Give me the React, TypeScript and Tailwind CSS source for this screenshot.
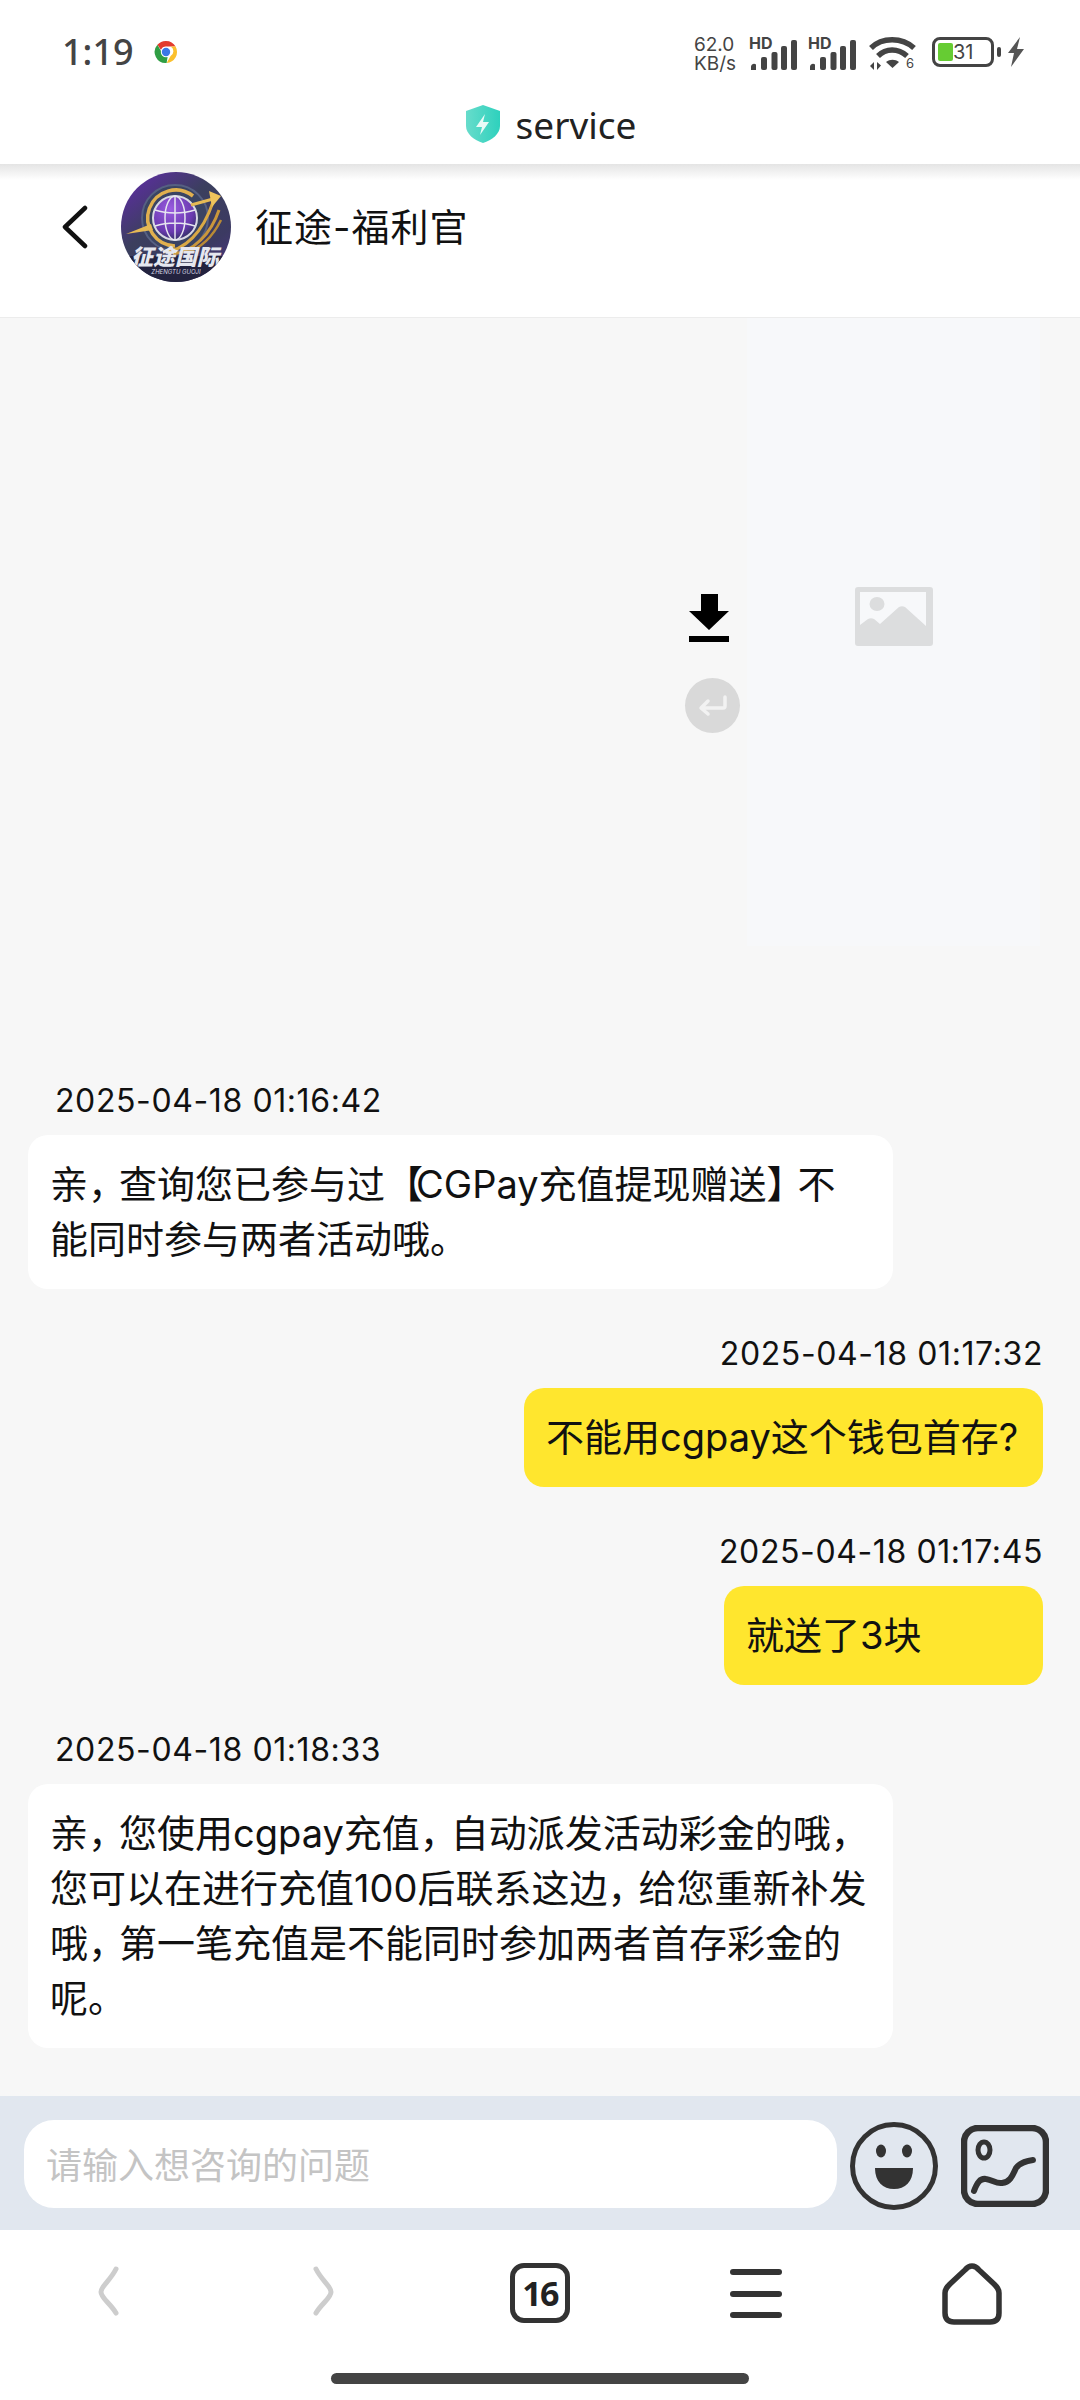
const cjk = "font-['Inter','Noto_Sans_CJK_SC',sans-serif]";

function Punct({ children }: { children: React.ReactNode }) {
	return <span className="tracking-[-7px]">{children}</span>;
}

function ChromeIcon() {
	return (
		<svg width="24" height="24" viewBox="0 0 24 24">
			<path d="M12 1a11 11 0 0 1 9.6 5.6H12a5.4 5.4 0 0 0-5 3.4L3.4 4.8A11 11 0 0 1 12 1z" fill="#e33b2e" />
			<path d="M21.6 6.6A11 11 0 0 1 12.6 23l4-7a5.4 5.4 0 0 0 .1-9.4z" fill="#fbc02d" />
			<path d="M12.6 23A11 11 0 0 1 3.4 4.8L7.6 12a5.4 5.4 0 0 0 6 5z" fill="#2f9e44" />
			<circle cx="12" cy="12" r="5.2" fill="#fff" />
			<circle cx="12" cy="12" r="4.2" fill="#3b78e7" />
		</svg>
	);
}

function Signal() {
	return (
		<div className="relative w-[49px] h-[34px]">
			<span className="absolute left-0 -top-[2px] text-[16px] leading-[16px] font-bold text-[#444] font-['Inter',sans-serif]">HD</span>
			<svg className="absolute left-0 top-0" width="49" height="34" viewBox="0 0 49 34" fill="#444">
				<path d="M2 33v-3.5a3 3 0 0 1 5-2V33z" />
				<rect x="12" y="20" width="6" height="13" rx="2" />
				<rect x="22.5" y="15" width="6" height="18" rx="2" />
				<rect x="32" y="9" width="6" height="24" rx="2" />
				<rect x="42" y="3" width="6" height="30" rx="2" />
			</svg>
		</div>
	);
}

function Wifi() {
	return (
		<div className="relative w-[48px] h-[36px]">
			<svg width="48" height="36" viewBox="0 0 48 36" fill="none">
				<path d="M2 13C13 2 33 2 45 13" stroke="#444" strokeWidth="5.5" />
				<path d="M9 21C17 13 29 13 38 21" stroke="#444" strokeWidth="5.5" />
				<path d="M17 27c4-3 9-3 13 0l-6.500 6z" fill="#444" />
				<path d="M5 27v8l-4-4zM8 35v-8l4 3.500z" fill="#444" />
			</svg>
			<span className="absolute left-[37px] top-[20px] text-[13px] leading-[16px] text-[#444] font-['Inter',sans-serif]">6</span>
		</div>
	);
}

function Battery() {
	return (
		<div className="flex items-center gap-[3px]">
			<div className="w-[62px] h-[30px] rounded-[8px] border-[3px] border-[#444] flex items-center pl-[3px] relative">
				<div className="w-[15px] h-[18px] bg-[#66cc33] rounded-[2px]" />
				<span className="text-[20px] leading-[20px] text-[#444] font-['Inter',sans-serif]">31</span>
			</div>
			<div className="w-[4px] h-[10px] bg-[#444] rounded-[2px]" />
		</div>
	);
}

function StatusBar() {
	return (
		<div className="h-[104px] flex items-start justify-between pl-[62px] pr-[55px] pt-[35px]">
			<div className="flex items-center h-[34px]">
				<span className="w-[92px] text-[#444] text-[36px] leading-[34px] font-medium font-['Noto_Sans',sans-serif]">1:19</span>
				<ChromeIcon />
			</div>
			<div className="flex items-start">
				<div className="w-[46px] mr-[8px] text-[#444] text-[19px] leading-[19px] whitespace-nowrap font-['Inter',sans-serif]">
					62.0
					<br />
					KB/s
				</div>
				<div className="flex gap-[10px] ml-[1px] mt-[2px]">
					<Signal />
					<Signal />
				</div>
				<div className="ml-[12px]"><Wifi /></div>
				<div className="ml-[15px] mt-[2px]"><Battery /></div>
				<svg className="ml-[6px] mt-[2px]" width="18" height="30" viewBox="0 0 18 30" fill="#555">
					<path d="M13 0 1 16h6l-3 14L17 12h-7z" />
				</svg>
			</div>
		</div>
	);
}

function ServiceRow() {
	return (
		<div className="h-[60px] flex items-start justify-center gap-[15px] pl-[21px]">
			<svg width="36" height="40" viewBox="0 0 36 40">
				<defs>
					<linearGradient id="shield" x1="0" x2="1">
						<stop offset="0" stopColor="#67dccb" />
						<stop offset="1" stopColor="#2ed1bd" />
					</linearGradient>
				</defs>
				<path d="M18 1 35 7v15c0 8-8 14-17 17C9 36 1 30 1 22V7z" fill="url(#shield)" />
				<path d="M20 10 11 23h6l-2 8 9-13h-6z" fill="#e8fbf7" />
			</svg>
			<span className="text-[37px] leading-[42px] text-[#222] font-['Noto_Sans',sans-serif]">service</span>
		</div>
	);
}

function Avatar() {
	return (
		<svg width="110" height="110" viewBox="0 0 110 110">
			<defs>
				<linearGradient id="ava" x1="0.1" y1="0" x2="0.9" y2="1">
					<stop offset="0" stopColor="#5f2ca6" />
					<stop offset="0.4" stopColor="#3b3f5e" />
					<stop offset="0.75" stopColor="#3c3a62" />
					<stop offset="1" stopColor="#4c3585" />
				</linearGradient>
				<radialGradient id="globe" cx="0.4" cy="0.3" r="0.85">
					<stop offset="0" stopColor="#9a5ce0" />
					<stop offset="0.6" stopColor="#6a3ab0" />
					<stop offset="1" stopColor="#0e2a38" />
				</radialGradient>
				<clipPath id="avaClip"><circle cx="55" cy="55" r="55" /></clipPath>
			</defs>
			<g clipPath="url(#avaClip)">
				<rect width="110" height="110" fill="url(#ava)" />
				<path d="M0 84h110v26H0z" fill="#23233f" />
				<circle cx="54" cy="46" r="33" fill="#3a4463" stroke="#566082" strokeWidth="2" />
				<path d="M72 24A28 28 0 1 0 54 74" fill="none" stroke="#e0b04f" strokeWidth="3.500" />
				<circle cx="54" cy="46" r="22" fill="url(#globe)" stroke="#d8d8e4" strokeWidth="2" />
				<g fill="none" stroke="#e6e6f0" strokeWidth="1.500">
					<ellipse cx="54" cy="46" rx="10" ry="22" />
					<path d="M54 24v44M34 38c12 4 28 4 40 0M34 54c12-4 28-4 40 0" />
				</g>
				<path d="M5 62 30 52l2 6z" fill="#e5b955" />
				<path d="M42 80c22-1 40-20 50-50" fill="none" stroke="#d9a945" strokeWidth="3" />
				<path d="M52 82c20-2 38-20 46-44" fill="none" stroke="#c9973c" strokeWidth="3" />
				<path d="M66 80c14-4 26-16 34-32" fill="none" stroke="#b98a35" strokeWidth="2.500" />
				<path d="M70 33 92 27" stroke="#e5b955" strokeWidth="3" />
				<path d="M88 19 100 24 91 35z" fill="#efc35c" />
				<text x="54" y="93" textAnchor="middle" fontSize="22" fontWeight="900" fontStyle="italic" fill="#e5e7ef" fontFamily="'Noto Sans CJK SC', sans-serif">征途国际</text>
				<text x="55" y="102" textAnchor="middle" fontSize="6" fontStyle="italic" fill="#d8d8e4" fontFamily="Inter, sans-serif">ZHENGTU GUOJI</text>
			</g>
		</svg>
	);
}

function Header() {
	return (
		<div className="h-[154px] bg-white border-b border-[#ececec] flex items-center pl-[60px] pb-[28px] relative">
			<div className="absolute left-0 right-0 top-0 h-[16px] bg-gradient-to-b from-[#e4e4e4] to-white" />
			<svg className="relative" width="28" height="44" viewBox="0 0 28 44" fill="none">
				<path d="M25 3 5 22l20 19" stroke="#111" strokeWidth="4.500" strokeLinecap="round" strokeLinejoin="round" />
			</svg>
			<div className="relative ml-[33px]"><Avatar /></div>
			<span className={`relative ml-[24px] text-[38px] tracking-[1px] leading-[50px] text-[#111] ${cjk}`}>征途-福利官</span>
		</div>
	);
}

function MediaPlaceholder() {
	return (
		<div className="h-[762px] flex items-start pl-[685px]">
			<div className="w-[55px] pt-[276px] flex flex-col items-center">
				<svg className="-ml-[8px]" width="40" height="49" viewBox="0 0 40 49">
					<path d="M12 0h17v17h11L20 36 0 17h12zM0 42h40v6H0z" fill="#000" />
				</svg>
				<div className="mt-[35px] w-[55px] h-[55px] rounded-full bg-[#d9d9d9] flex items-center justify-center">
					<svg width="32" height="24" viewBox="0 0 32 24" fill="none">
						<path d="M28 3v9a2 2 0 0 1-2 2H5M11 7l-7 7 7 6" stroke="#f2f2f2" strokeWidth="3.500" strokeLinecap="round" strokeLinejoin="round" />
					</svg>
				</div>
			</div>
			<div className="ml-[7px] w-[293px] h-[628px] bg-[#f7f8fa] flex justify-center pt-[269px]">
				<svg width="78" height="59" viewBox="0 0 78 59">
					<path fillRule="evenodd" d="M3 0h72a3 3 0 0 1 3 3v53a3 3 0 0 1-3 3H3a3 3 0 0 1-3-3V3a3 3 0 0 1 3-3zm2 5v33l8-6c2-1 4-1 6 0l6 5 19-17c2-1 4-1 6 0l21 19V5z" fill="#dcddde" />
					<ellipse cx="22" cy="17" rx="7.500" ry="7" fill="#dcddde" />
				</svg>
			</div>
		</div>
	);
}

interface MessageProps {
	time: string;
	mine?: boolean;
	children: React.ReactNode;
	width: string;
}

function Message({ time, mine, children, width }: MessageProps) {
	return (
		<div className={`flex flex-col mb-[44px] ${mine ? "items-end pr-[37px]" : "items-start pl-[28px]"}`}>
			<div className={`h-[40px] leading-[42px] mb-[15px] text-[32px] tracking-[0.6px] text-[#111] whitespace-nowrap ${mine ? "" : "pl-[27px]"} ${cjk}`}>
				{time}
			</div>
			<div className={`${width} rounded-[20px] pl-[22px] pr-[23px] py-[22px] text-[38px] leading-[55px] text-[#111] whitespace-nowrap ${mine ? "bg-[#ffe62e]" : "bg-white"} ${cjk}`}>
				{children}
			</div>
		</div>
	);
}

function Chat() {
	return (
		<div className="h-[1778px] bg-[#f7f7f7] overflow-hidden">
			<MediaPlaceholder />
			<Message time="2025-04-18 01:16:42" width="w-[865px]">
				亲<Punct>，</Punct>查询您已参与过<Punct>【</Punct>CGPay充值提现赠送<Punct>】</Punct>不
				<br />
				能同时参与两者活动哦。
			</Message>
			<Message time="2025-04-18 01:17:32" mine width="w-[519px]">
				不能用cgpay这个钱包首存?
			</Message>
			<Message time="2025-04-18 01:17:45" mine width="w-[319px]">
				就送了3块
			</Message>
			<Message time="2025-04-18 01:18:33" width="w-[865px]">
				亲<Punct>，</Punct>您使用cgpay充值<Punct>，</Punct>自动派发活动彩金的哦，
				<br />
				您可以在进行充值100后联系这边<Punct>，</Punct>给您重新补发
				<br />
				哦<Punct>，</Punct>第一笔充值是不能同时参加两者首存彩金的
				<br />
				呢。
			</Message>
		</div>
	);
}

function InputBar() {
	return (
		<div className="h-[134px] bg-[#e1e7ef] flex items-start pl-[24px] pt-[24px]">
			<div className={`w-[813px] h-[88px] bg-white rounded-[30px] flex items-center pl-[22px] pt-[3px] text-[36px] text-[#c4c4c4] ${cjk}`}>
				请输入想咨询的问题
			</div>
			<svg className="ml-[13px] mt-[2px]" width="88" height="88" viewBox="0 0 88 88">
				<circle cx="44" cy="44" r="41.500" fill="none" stroke="#333" strokeWidth="5" />
				<ellipse cx="31" cy="29" rx="5" ry="6.500" fill="#333" />
				<ellipse cx="57" cy="29" rx="5" ry="6.500" fill="#333" />
				<path d="M25 46h38c0 14-8 21-19 21S25 60 25 46z" fill="#333" />
			</svg>
			<svg className="ml-[23px] mt-[5px]" width="88" height="82" viewBox="0 0 88 82" fill="none">
				<rect x="3" y="3" width="82" height="76" rx="14" stroke="#333" strokeWidth="6.500" />
				<ellipse cx="23" cy="25" rx="6" ry="8" stroke="#333" strokeWidth="5" />
				<path d="M13 66c3-8 6-13 12-12 7 1 10 5 16 4 9-1 11-9 14-15 3-4 9-7 17-8" stroke="#333" strokeWidth="6" strokeLinecap="round" />
			</svg>
		</div>
	);
}

function BrowserBar() {
	return (
		<div className="h-[170px] bg-white flex flex-col">
			<div className="grid grid-cols-5 h-[94px] pt-[33px] justify-items-center items-start">
				<svg className="mt-[3px]" width="24" height="50" viewBox="0 0 24 50" fill="none">
					<path d="M20 3C14 15 5 20 5 26s9 11 15 21" stroke="#cdcdcd" strokeWidth="5" strokeLinecap="round" />
				</svg>
				<svg className="mt-[3px]" width="24" height="50" viewBox="0 0 24 50" fill="none">
					<path d="M4 3c6 12 15 17 15 23S10 37 4 47" stroke="#cdcdcd" strokeWidth="5" strokeLinecap="round" />
				</svg>
				<div className="w-[60px] h-[60px] rounded-[14px] border-[5px] border-[#333] flex items-center justify-center text-[34px] font-bold text-[#222] tracking-tighter font-['Noto_Sans',sans-serif]">
					16
				</div>
				<div className="w-[52px] h-[49px] mt-[6px] flex flex-col justify-between">
					<div className="h-[6px] rounded-full bg-[#333]" />
					<div className="h-[6px] rounded-full bg-[#333]" />
					<div className="h-[6px] rounded-full bg-[#333]" />
				</div>
				<svg width="60" height="62" viewBox="0 0 60 62" fill="none">
					<path d="M30 3c2.500 0 5 1.500 7 4l15 14c3 3 5 5 5 9v20c0 6-3 9-9 9H12c-6 0-9-3-9-9V30c0-4 2-6 5-9L23 7c2-2.500 4.500-4 7-4z" stroke="#333" strokeWidth="5.500" />
				</svg>
			</div>
			<div className="mt-[49px] mx-auto w-[418px] h-[11px] rounded-full bg-[#444]" />
		</div>
	);
}

export default function App() {
	return (
		<div className="w-[1080px] h-[2400px] bg-white overflow-hidden">
			<StatusBar />
			<ServiceRow />
			<Header />
			<Chat />
			<InputBar />
			<BrowserBar />
		</div>
	);
}
